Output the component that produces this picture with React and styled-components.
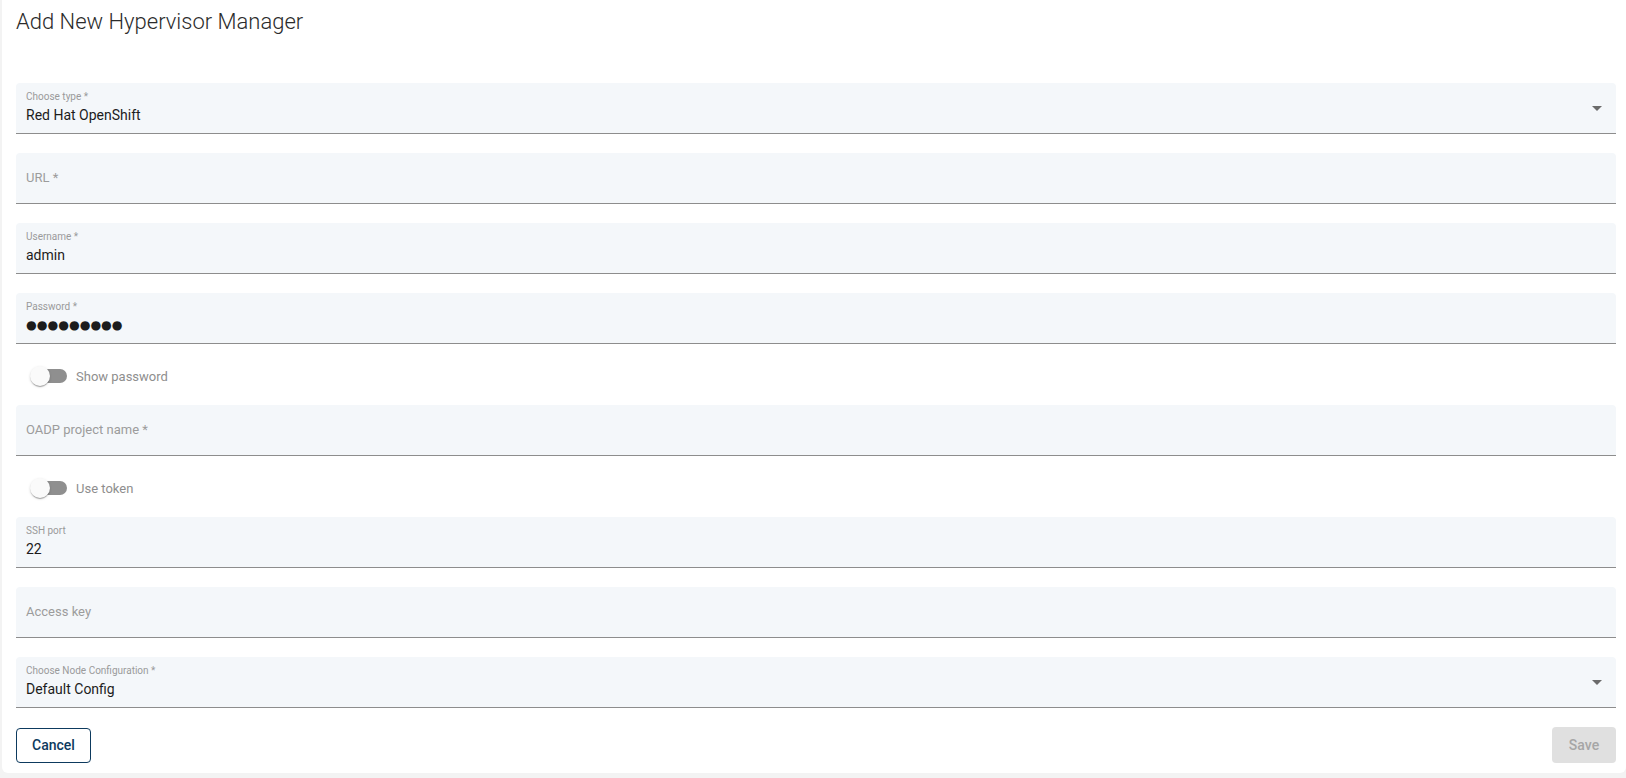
import React from "react";
import styled, { createGlobalStyle } from "styled-components";

const GlobalStyle = createGlobalStyle`
  body {
    margin: 0;
    background: #f3f3f3;
    font-family: Roboto, "Liberation Sans", sans-serif;
  }
`;

const Page = styled.div`
  padding-left: 2px;
  padding-bottom: 3px;
`;

const Card = styled.div`
  background: #fff;
  border-radius: 0 0 6px 6px;
  padding: 0 10px 10px 14px;
`;

const Title = styled.h1`
  margin: 0 0 45px;
  padding-top: 6px;
  font-size: 22px;
  line-height: 32px;
  font-weight: 300;
  color: #2b2b2b;
`;

const Form = styled.div`
  display: flex;
  flex-direction: column;
`;

const Field = styled.div`
  position: relative;
  height: 51px;
  box-sizing: border-box;
  background: #f4f7fa;
  border-radius: 4px 4px 0 0;
  border-bottom: 1px solid #8d8d8d;
  padding: 0 10px;
  display: flex;
  flex-direction: column;
  justify-content: ${(p) => (p.$empty ? "center" : "flex-start")};
  padding-top: ${(p) => (p.$empty ? "0" : "8px")};
  & + & {
    margin-top: 19px;
  }
`;

const Label = styled.span`
  font-size: 10px;
  line-height: 12px;
  color: #9a9a9a;
`;

const Placeholder = styled.span`
  font-size: 13px;
  line-height: 20px;
  color: #9c9c9c;
`;

const Value = styled.span`
  margin-top: 2px;
  font-size: 14px;
  line-height: 20px;
  color: #1c1c1c;
`;

const Dots = styled.span`
  margin-top: 2px;
  font-family: "DejaVu Sans", sans-serif;
  font-size: 12.3px;
  line-height: 20px;
  color: #1c1c1c;
`;

const Arrow = styled.svg`
  position: absolute;
  right: 7px;
  top: 50%;
  margin-top: -12px;
  width: 24px;
  height: 24px;
  fill: #6b6b6b;
`;

const SwitchRow = styled.label`
  display: flex;
  align-items: center;
  height: 38px;
  margin: 13px 0 10px;
`;

const SwitchBox = styled.span`
  position: relative;
  display: inline-flex;
  align-items: center;
  width: 34px;
  height: 38px;
  padding-left: 17px;
  box-sizing: content-box;
`;

const Track = styled.span`
  width: 34px;
  height: 14px;
  border-radius: 7px;
  background: #8f8f8f;
`;

const Thumb = styled.span`
  position: absolute;
  left: 14px;
  top: 9px;
  width: 20px;
  height: 20px;
  border-radius: 50%;
  background: #fafafa;
  box-shadow: 0 2px 1px -1px rgba(0, 0, 0, 0.2), 0 1px 1px 0 rgba(0, 0, 0, 0.14),
    0 1px 3px 0 rgba(0, 0, 0, 0.12);
`;

const SwitchText = styled.span`
  margin-left: 9px;
  font-size: 13px;
  color: #8e8e8e;
`;

const Actions = styled.div`
  display: flex;
  justify-content: space-between;
  align-items: center;
  margin-top: 19px;
`;

const Button = styled.button`
  min-width: 64px;
  height: ${(p) => (p.$outlined ? "35px" : "36px")};
  padding: 0 15px;
  border-radius: 4px;
  font-family: Roboto, sans-serif;
  font-size: 14px;
  font-weight: 500;
  cursor: pointer;
  border: ${(p) => (p.$outlined ? "1px solid #0d3a5e" : "none")};
  background: ${(p) => (p.$outlined ? "#fff" : "#e0e0e0")};
  color: ${(p) => (p.$outlined ? "#0d3a5e" : "#a6a6a6")};
`;

const DropArrow = () => (
  <Arrow viewBox="0 0 24 24">
    <path d="M7 10l5 5 5-5z" />
  </Arrow>
);

const Input = ({ label, value, select, password }) => {
  if (!value) {
    return (
      <Field $empty>
        <Placeholder>{label}</Placeholder>
        {select && <DropArrow />}
      </Field>
    );
  }
  return (
    <Field>
      <Label>{label}</Label>
      {password ? <Dots>{value}</Dots> : <Value>{value}</Value>}
      {select && <DropArrow />}
    </Field>
  );
};

const Toggle = ({ text }) => (
  <SwitchRow>
    <SwitchBox>
      <Track />
      <Thumb />
    </SwitchBox>
    <SwitchText>{text}</SwitchText>
  </SwitchRow>
);

const Group = styled.div`
  display: flex;
  flex-direction: column;
`;

export default function App() {
  return (
    <Page>
      <GlobalStyle />
      <Card>
        <Title>Add New Hypervisor Manager</Title>
        <Form>
          <Group>
            <Input label="Choose type *" value="Red Hat OpenShift" select />
            <Input label="URL *" />
            <Input label="Username *" value="admin" />
            <Input label="Password *" value="●●●●●●●●●" password />
          </Group>
          <Toggle text="Show password" />
          <Group>
            <Input label="OADP project name *" />
          </Group>
          <Toggle text="Use token" />
          <Group>
            <Input label="SSH port" value="22" />
            <Input label="Access key" />
            <Input label="Choose Node Configuration *" value="Default Config" select />
          </Group>
        </Form>
        <Actions>
          <Button $outlined>Cancel</Button>
          <Button disabled>Save</Button>
        </Actions>
      </Card>
    </Page>
  );
}
